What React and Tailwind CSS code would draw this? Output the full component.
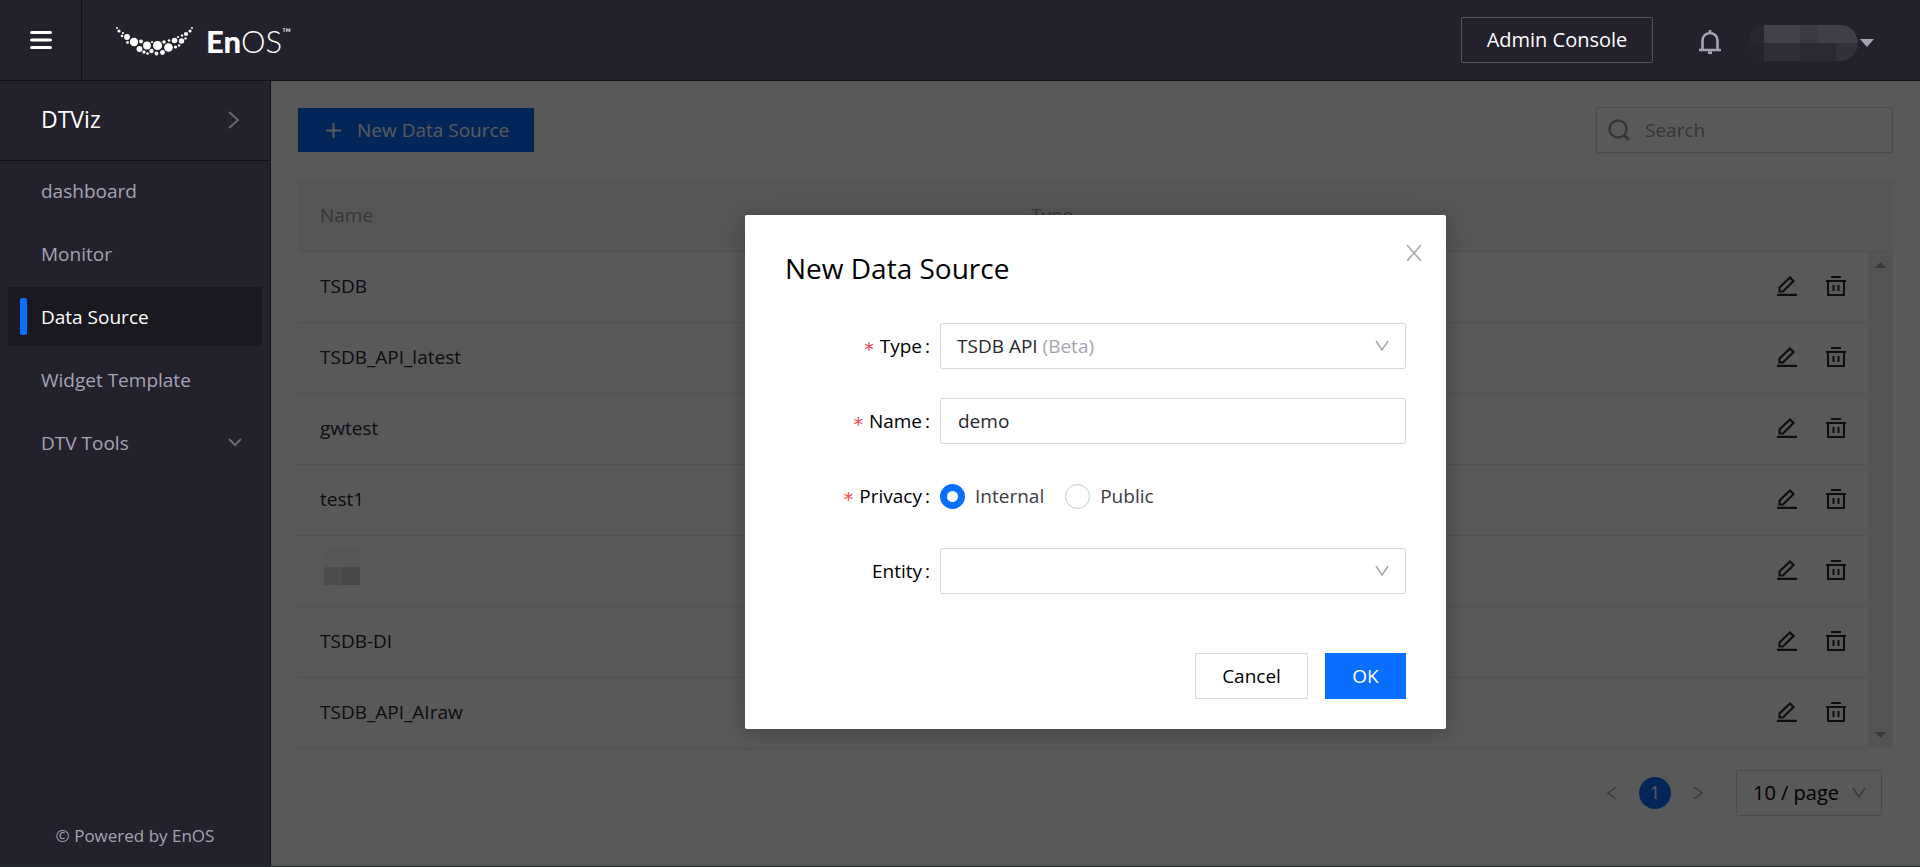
import { useState } from 'react';

const navItems = [
  { label: 'dashboard' },
  { label: 'Monitor' },
  { label: 'Data Source', active: true },
  { label: 'Widget Template' },
  { label: 'DTV Tools', expandable: true },
];

const sources = ['TSDB', 'TSDB_API_latest', 'gwtest', 'test1', null, 'TSDB-DI', 'TSDB_API_AIraw'];

// [cx, cy, r]
const logoDots = [
  [1, 1, 1], [3, 4, 1.6], [7, 6, 1.1], [6, 9, 1.3], [11, 10, 2.9], [11.5, 15.5, 1.4],
  [18, 15, 4.2], [25, 14.5, 2], [23.5, 22, 2.9], [31, 18.5, 3.9], [36, 15, 1.1], [28, 25, 1.7],
  [31.5, 26.5, 1.3], [35.5, 24, 2.2], [41.5, 18.5, 4.6], [40.5, 26.5, 1.9], [46.5, 25.5, 2.4],
  [48, 15, 1.7], [53, 13.5, 1.2], [52.5, 20.5, 4.3], [58.5, 13.5, 2.8], [62, 10, 1.1],
  [59.5, 20, 1.6], [63, 18.5, 1.2], [65.5, 14, 2.7], [66, 8.5, 1.2], [70, 7, 2.1],
  [69.5, 11.5, 1.2], [74, 4, 1.6], [76, 1, 1],
];

const Chevron = ({ className }) => (
  <svg className={className} viewBox="0 0 14 11" fill="none" stroke="currentColor" strokeWidth="1.5">
    <path d="M1 1l6 9 6-9" />
  </svg>
);

const EditIcon = () => (
  <svg className="h-5 w-5" viewBox="0 0 20 20" fill="none" stroke="currentColor" strokeWidth="2.2">
    <path d="M2.500 15.500v-4L13 1.500l3.500 3.500L6 15.500z M0 18.900h20" />
  </svg>
);

const TrashIcon = () => (
  <svg className="h-5 w-5" viewBox="0 0 20 20" fill="none" stroke="currentColor" strokeWidth="2">
    <path d="M5 1h10M0 5h20M2 5v14h16V5" />
    <path d="M7.500 9v6M12.500 9v6" />
  </svg>
);

const Header = () => (
  <header className="flex h-[81px] shrink-0 items-center border-b border-[#131218] bg-[#23212b]">
    <button aria-label="Menu" className="flex h-full w-[82px] items-center border-r border-[#131218] pl-[30px] text-white">
      <svg className="h-5 w-[22px]" viewBox="0 0 22 20" stroke="currentColor" strokeWidth="3.2" strokeLinecap="round">
        <path d="M1.600 2.500h18.800M1.600 10h18.800M1.600 17.500h18.800" />
      </svg>
    </button>
    <a href="#" className="ml-[34px] flex items-center pt-[3px] text-white">
      <svg className="h-[29px] w-[78px]" viewBox="0 0 78 29" fill="currentColor">
        {logoDots.map(([cx, cy, r]) => <circle key={`${cx}-${cy}`} cx={cx} cy={cy} r={r} />)}
      </svg>
      <span className="ml-3 flex pb-[2px] font-[Lato,sans-serif] text-[31px] leading-8">
        <b className="font-black">En</b>
        <span className="font-light">OS</span>
        <span className="text-xs leading-4">™</span>
      </span>
    </a>
    <button className="ml-auto h-[46px] w-48 rounded-xs border border-[#55535f] text-xl text-white">Admin Console</button>
    <button aria-label="Notifications" className="ml-[46px] pt-1 text-[#a5a4b4]">
      <svg className="h-6 w-[22px]" viewBox="0 0 22 24" fill="none" stroke="currentColor" strokeWidth="2.6">
        <path d="M3.500 19.500V10.500a7.500 7.500 0 0 1 15 0v9M0 20h22M11 0v3M9 22.700h4" />
      </svg>
    </button>
    <button aria-label="Account" className="mr-[46px] ml-[27px] flex items-center gap-[2px] pt-[6px] text-[#a5a4b4]">
      <span className="flex h-9 w-[110px] flex-col overflow-hidden rounded-[18px]">
        <span className="flex h-[18px]">
          <span className="w-4 bg-[#282731]" />
          <span className="w-9 bg-[#414147]" />
          <span className="w-[18px] bg-[#393943]" />
          <span className="flex-1 bg-[#3f3f47]" />
        </span>
        <span className="flex h-[18px]">
          <span className="w-4 bg-[#25242e]" />
          <span className="w-9 bg-[#302e38]" />
          <span className="w-9 bg-[#2a2a34]" />
          <span className="flex-1 bg-[#33313b]" />
        </span>
      </span>
      <svg className="h-[9px] w-[14px]" viewBox="0 0 14 9" fill="currentColor"><path d="M0 0h14L7 8z" /></svg>
    </button>
  </header>
);

const Sidebar = () => (
  <aside className="flex w-[271px] shrink-0 flex-col border-r border-[#131218] bg-[#23212b] text-[#a5a4b4]">
    <div className="flex h-20 items-center justify-between border-b border-[#131218] pr-[30px] pb-[2px] pl-[41px] text-[23px] text-white">
      DTViz
      <svg className="h-[18px] w-3 text-[#696773]" viewBox="0 0 12 18" fill="none" stroke="currentColor" strokeWidth="2"><path d="M1 1l9 8-9 8" /></svg>
    </div>
    <nav className="flex flex-col gap-1 px-2">
      {navItems.map((item) => (
        <a
          key={item.label}
          href="#"
          className={`flex h-[59px] items-center justify-between pr-5 ${item.active ? 'bg-[#1a191f] pl-3 text-white' : 'pl-[33px]'}`}
        >
          <span className="flex items-center gap-[14px]">
            {item.active && <span className="h-[37px] w-[7px] rounded-xs bg-[#0a6eff]" />}
            <span className="pt-[2px]">{item.label}</span>
          </span>
          {item.expandable && (
            <svg className="h-[9px] w-[14px] text-[#696773]" viewBox="0 0 14 9" fill="none" stroke="currentColor" strokeWidth="2"><path d="M1 1l6 6 6-6" /></svg>
          )}
        </a>
      ))}
    </nav>
    <p className="mt-auto pb-[18px] text-center text-[17px] leading-6">© Powered by EnOS</p>
  </aside>
);

const DataTable = () => (
  <div className="mt-[27px]">
    <table className="w-full table-fixed text-left">
      <colgroup>
        <col className="w-[711px]" />
        <col />
        <col className="w-[142px]" />
        <col className="w-[25px]" />
      </colgroup>
      <thead>
        <tr className="h-[71px] border-b border-[#e4e4ea] bg-[#f7f7f8] text-[#9a99a8]">
          <th className="pl-[22px] font-normal">Name</th>
          <th className="pl-[22px] font-normal">Type</th>
          <th />
          <th />
        </tr>
      </thead>
      <tbody>
        {sources.map((name, i) => (
          <tr key={i} className="h-[71px]">
            <td className="border-b border-[#e8e8ee] pl-[22px]">
              {name || (
                <span className="mb-2 ml-1 grid h-9 w-9 grid-cols-2">
                  <span className="bg-[#f8f8f8]" />
                  <span className="bg-[#f5f5f5]" />
                  <span className="bg-[#dcdcdc]" />
                  <span className="bg-[#cecece]" />
                </span>
              )}
            </td>
            <td className="border-b border-[#e8e8ee]" />
            <td className="border-b border-[#e8e8ee]">
              <div className="flex justify-end gap-[29px] pr-[22px] pb-[2px]">
                <button aria-label="Edit"><EditIcon /></button>
                <button aria-label="Delete"><TrashIcon /></button>
              </div>
            </td>
            {i === 0 && (
              <td rowSpan={sources.length} className="h-px bg-[#f1f1f1] p-0 text-[#a3a3a3]">
                <div className="flex h-full flex-col items-center justify-between py-[10px]">
                  <svg className="h-[6px] w-[11px]" viewBox="0 0 11 6" fill="currentColor"><path d="M0 6h11L5.500 0z" /></svg>
                  <svg className="h-[6px] w-[11px]" viewBox="0 0 11 6" fill="currentColor"><path d="M0 0h11L5.500 6z" /></svg>
                </div>
              </td>
            )}
          </tr>
        ))}
      </tbody>
    </table>
  </div>
);

const Pagination = () => (
  <div className="mt-[21px] flex items-center justify-end pr-[11px]">
    <button aria-label="Previous page" className="text-[#a5a4b4]">
      <svg className="h-[14px] w-[10px]" viewBox="0 0 10 14" fill="none" stroke="currentColor" strokeWidth="1.5"><path d="M9 1L1 7l8 6" /></svg>
    </button>
    <button className="mx-[22px] h-8 w-8 rounded-full bg-[#0a6eff] text-white">1</button>
    <button aria-label="Next page" className="text-[#a5a4b4]">
      <svg className="h-[14px] w-[10px]" viewBox="0 0 10 14" fill="none" stroke="currentColor" strokeWidth="1.5"><path d="M1 1l8 6-8 6" /></svg>
    </button>
    <div className="relative ml-[33px]">
      <select aria-label="Page size" className="h-[46px] w-[146px] appearance-none rounded-xs border border-[#d5d5de] pl-4 text-xl text-black">
        <option>10 / page</option>
      </select>
      <Chevron className="pointer-events-none absolute top-[17px] right-4 h-[11px] w-[14px] text-[#a5a4b4]" />
    </div>
  </div>
);

const Field = ({ label, htmlFor, required, children }) => (
  <div className="flex h-[46px] items-center">
    <label htmlFor={htmlFor} className="w-[155px] shrink-0 pr-[10px] text-right text-black">
      {required && <span className="mr-[6px] align-[-3px] font-['DejaVu_Sans',sans-serif] leading-none text-[#f5464b]">*</span>}
      {label}
      <span className="ml-[3px]">:</span>
    </label>
    {children}
  </div>
);

const Radio = ({ label, checked, onChange }) => (
  <label className="mr-[21px] flex items-center gap-[10px] text-[#3c3a45]">
    <input
      type="radio"
      name="privacy"
      checked={checked}
      onChange={onChange}
      className="h-[25px] w-[25px] appearance-none rounded-full border border-[#c8c8d4] checked:border-[7px] checked:border-[#0a6eff]"
    />
    {label}
  </label>
);

const NewSourceModal = () => {
  const [name, setName] = useState('demo');
  const [privacy, setPrivacy] = useState('Internal');

  return (
    <div className="absolute inset-0 bg-black/65">
      <form role="dialog" aria-labelledby="modal-title" className="relative mx-auto mt-[134px] w-[701px] rounded-xs bg-white px-10 pt-[31px] pb-[30px] shadow-[0_4px_24px_rgba(0,0,0,0.25)]">
        <button type="button" aria-label="Close" className="absolute top-[30px] right-6 text-[#a5a4b4]">
          <svg className="h-4 w-4" viewBox="0 0 16 16" fill="none" stroke="currentColor" strokeWidth="1.5"><path d="M1 0l14 16M15 0L1 16" /></svg>
        </button>
        <h2 id="modal-title" className="text-[28px] leading-[44px] text-black">New Data Source</h2>
        <div className="mt-[33px] flex flex-col gap-[29px]">
          <Field label="Type" htmlFor="type" required>
            <div className="relative flex-1">
              <select id="type" className="flex h-[46px] w-full items-center rounded-xs border border-[#d8d8e0] px-4 py-0 [appearance:base-select] [&::picker-icon]:hidden">
                <button className="w-full text-left">
                  <selectedcontent />
                </button>
                <option>TSDB API <span className="text-[#a5a4b4]">(Beta)</span></option>
              </select>
              <Chevron className="pointer-events-none absolute top-[17px] right-[17px] h-[11px] w-[14px] text-[#a5a4b4]" />
            </div>
          </Field>
          <Field label="Name" htmlFor="name" required>
            <input id="name" value={name} onChange={(e) => setName(e.target.value)} className="h-[46px] flex-1 rounded-xs border border-[#d8d8e0] px-[17px]" />
          </Field>
          <Field label="Privacy" required>
            <Radio label="Internal" checked={privacy === 'Internal'} onChange={() => setPrivacy('Internal')} />
            <Radio label="Public" checked={privacy === 'Public'} onChange={() => setPrivacy('Public')} />
          </Field>
          <Field label="Entity" htmlFor="entity">
            <div className="relative flex-1">
              <select id="entity" className="h-[46px] w-full appearance-none rounded-xs border border-[#d8d8e0] px-4">
                <option></option>
              </select>
              <Chevron className="pointer-events-none absolute top-[17px] right-[17px] h-[11px] w-[14px] text-[#a5a4b4]" />
            </div>
          </Field>
        </div>
        <div className="mt-[59px] flex justify-end gap-[17px]">
          <button type="button" className="h-[46px] w-[113px] border border-[#d8d8e0] text-black">Cancel</button>
          <button type="button" className="h-[46px] w-[81px] bg-[#0a6eff] text-white">OK</button>
        </div>
      </form>
    </div>
  );
};

const App = () => (
  <div className="flex min-h-screen flex-col border-b border-[#1f2d30] bg-[#23212b] font-['Open_Sans',sans-serif] text-[19px] text-[#28262f]">
    <Header />
    <div className="flex flex-1">
      <Sidebar />
      <main className="relative min-w-0 flex-1 bg-white px-[27px] pt-[26px]">
        <div className="flex items-center justify-between">
          <button className="flex h-11 items-center gap-4 bg-[#0a6eff] pr-[25px] pl-[28px] text-white">
            <svg className="h-[15px] w-[15px]" viewBox="0 0 15 15" stroke="currentColor" strokeWidth="2"><path d="M0 7.500h15M7.500 0v15" /></svg>
            New Data Source
          </button>
          <div className="flex h-[46px] w-[297px] items-center gap-[15px] rounded-xs border border-[#d5d5de] pl-[11px] text-[#9a99a8]">
            <svg className="h-[22px] w-[22px]" viewBox="0 0 22 22" fill="none" stroke="currentColor" strokeWidth="2.5"><circle cx="10" cy="10" r="8.5" /><path d="M16 16l5 5" /></svg>
            <input aria-label="Search" placeholder="Search" className="min-w-0 flex-1 placeholder:text-[#9a99a8]" />
          </div>
        </div>
        <DataTable />
        <Pagination />
        <NewSourceModal />
      </main>
    </div>
  </div>
);

export default App;
